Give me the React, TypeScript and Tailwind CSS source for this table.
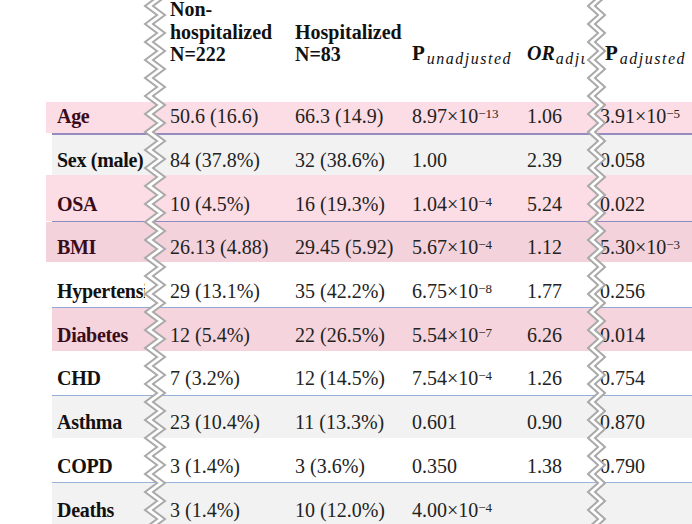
import React from 'react';

// scientific notation cell: 8.97×10⁻¹³
function Sci({ m, e }: { m: string; e: string }) {
    return (
        <span>
            {m}×10<sup className="text-[13px] top-[-5px]">{e}</sup>
        </span>
    );
}

type Row = {
    label: string;
    vals: React.ReactNode[];
    box: string;
    label_color: string;
    line?: string;
};

const rows: Row[] = [
    {
        label: 'Age',
        vals: ['50.6 (16.6)', '66.3 (14.9)', <Sci m="8.97" e="−13" />, '1.06', <Sci m="3.91" e="−5" />],
        box: 'ml-[46px] pl-[11px] h-[31px] pt-[2px] bg-[#fcdde5]',
        label_color: 'text-[#3a0c1a]',
        line: 'h-[2px] bg-[#958cc0]',
    },
    {
        label: 'Sex (male)',
        vals: ['84 (37.8%)', '32 (38.6%)', '1.00', '2.39', '0.058'],
        box: 'ml-[52px] pl-[5px] h-[40px] pt-[13px] bg-[#f2f2f2]',
        label_color: 'text-[#111]',
    },
    {
        label: 'OSA',
        vals: ['10 (4.5%)', '16 (19.3%)', <Sci m="1.04" e="−4" />, '5.24', '0.022'],
        box: 'ml-[46px] pl-[11px] h-[46px] pt-[17px] bg-[#fcdde5]',
        label_color: 'text-[#3a0c1a]',
        line: 'h-px bg-[#8d8cc2]',
    },
    {
        label: 'BMI',
        vals: ['26.13 (4.88)', '29.45 (5.92)', <Sci m="5.67" e="−4" />, '1.12', <Sci m="5.30" e="−3" />],
        box: 'ml-[46px] pl-[11px] h-[40px] pt-[13px] bg-[#f3d2dc]',
        label_color: 'text-[#3a0c1a]',
    },
    {
        label: 'Hypertension',
        vals: ['29 (13.1%)', '35 (42.2%)', <Sci m="6.75" e="−8" />, '1.77', '0.256'],
        box: 'ml-[52px] pl-[5px] h-[45px] pt-[17px] bg-white',
        label_color: 'text-[#111]',
        line: 'h-px bg-[#8faad6]',
    },
    {
        label: 'Diabetes',
        vals: ['12 (5.4%)', '22 (26.5%)', <Sci m="5.54" e="−7" />, '6.26', '0.014'],
        box: 'ml-[52px] pl-[5px] h-[43px] pt-[15px] bg-[#f5d4dd]',
        label_color: 'text-[#3a0c1a]',
    },
    {
        label: 'CHD',
        vals: ['7 (3.2%)', '12 (14.5%)', <Sci m="7.54" e="−4" />, '1.26', '0.754'],
        box: 'ml-[52px] pl-[5px] h-[44px] pt-[15px] bg-white',
        label_color: 'text-[#111]',
        line: 'h-px bg-[#95afd8]',
    },
    {
        label: 'Asthma',
        vals: ['23 (10.4%)', '11 (13.3%)', '0.601', '0.90', '0.870'],
        box: 'ml-[52px] pl-[5px] h-[42px] pt-[14px] bg-[#f2f2f2]',
        label_color: 'text-[#111]',
    },
    {
        label: 'COPD',
        vals: ['3 (1.4%)', '3 (3.6%)', '0.350', '1.38', '0.790'],
        box: 'ml-[52px] pl-[5px] h-[44px] pt-[16px] bg-white',
        label_color: 'text-[#111]',
        line: 'h-px bg-[#9bb3da]',
    },
    {
        label: 'Deaths',
        vals: ['3 (1.4%)', '10 (12.0%)', <Sci m="4.00" e="−4" />, '', ''],
        box: 'ml-[52px] pl-[5px] h-[41px] pt-[15px] bg-[#f2f2f2]',
        label_color: 'text-[#111]',
    },
];

// torn-edge break mark: white band between two gray zigzags
function Zigzag({ className, amp, gap }: { className: string; amp: number; gap: number }) {
    const step = 9;
    const left: string[] = [];
    const right: string[] = [];
    for (let i = 0; i * step < 540; i++) {
        const y = i * step - 3;
        const x = 5 + (i % 2 ? 0 : amp);
        left.push(`${x},${y}`);
        right.push(`${x + gap},${y}`);
    }
    const band = left.concat([...right].reverse()).join(' ');
    return (
        <svg className={className} width="32" height="524" viewBox="0 0 32 524">
            <polygon points={band} fill="#fff" />
            <polyline points={left.join(' ')} fill="none" stroke="#a9a9a9" strokeWidth="2" />
            <polyline points={right.join(' ')} fill="none" stroke="#a9a9a9" strokeWidth="2" />
        </svg>
    );
}

export default function App() {
    return (
        <div className="relative w-[692px] h-[524px] overflow-hidden bg-white font-['Liberation_Serif',serif]">
            {/* header */}
            <div className="flex h-[102px] pl-[57px] text-[20px] leading-[22.5px] font-bold text-[#111]">
                <div className="w-[113px] shrink-0" />
                <div className="w-[125px] shrink-0 -mt-[2px]">
                    Non-
                    <br />
                    hospitalized
                    <br />
                    N=222
                </div>
                <div className="w-[117px] shrink-0 mt-[20.5px]">
                    Hospitalized
                    <br />
                    N=83
                </div>
                <div className="w-[115px] shrink-0 mt-[41.5px] whitespace-nowrap">
                    <span className="text-[21px]">P</span>
                    <span className="font-normal italic text-[16px] leading-none tracking-[1.5px] align-[-4px] ml-[2px]">
                        unadjusted
                    </span>
                </div>
                <div className="w-[71px] shrink-0 mt-[41.5px]">
                    <div className="w-[58px] overflow-hidden whitespace-nowrap">
                        <span className="italic">OR</span>
                        <span className="font-normal italic text-[16px] leading-none tracking-[1.5px] align-[-4px] ml-[1px]">
                            adjusted
                        </span>
                    </div>
                </div>
                <div className="flex-1 pl-[7px] mt-[41.5px] whitespace-nowrap">
                    <span className="text-[21px]">P</span>
                    <span className="font-normal italic text-[16px] leading-none tracking-[1.5px] align-[-4px] ml-[2px]">
                        adjusted
                    </span>
                </div>
            </div>

            {/* body rows */}
            {rows.map((r) => (
                <div key={r.label}>
                    <div className={'flex text-[20px] leading-6 ' + r.box}>
                        <div className="w-[113px] shrink-0">
                            <div className={'w-[88px] overflow-hidden whitespace-nowrap font-bold tracking-[-0.3px] ' + r.label_color}>
                                {r.label}
                            </div>
                        </div>
                        <div className="w-[125px] shrink-0 text-[#222] whitespace-nowrap">{r.vals[0]}</div>
                        <div className="w-[117px] shrink-0 text-[#222] whitespace-nowrap">{r.vals[1]}</div>
                        <div className="w-[115px] shrink-0 text-[#222] whitespace-nowrap">{r.vals[2]}</div>
                        <div className="w-[73px] shrink-0 text-[#222] whitespace-nowrap">{r.vals[3]}</div>
                        <div className="flex-1 text-[#222] whitespace-nowrap">{r.vals[4]}</div>
                    </div>
                    {r.line && <div className={'ml-[52px] ' + r.line} />}
                </div>
            ))}

            <Zigzag className="absolute left-[140px] top-0" amp={12} gap={8} />
            <Zigzag className="absolute left-[583px] top-0" amp={10} gap={7} />
        </div>
    );
}
